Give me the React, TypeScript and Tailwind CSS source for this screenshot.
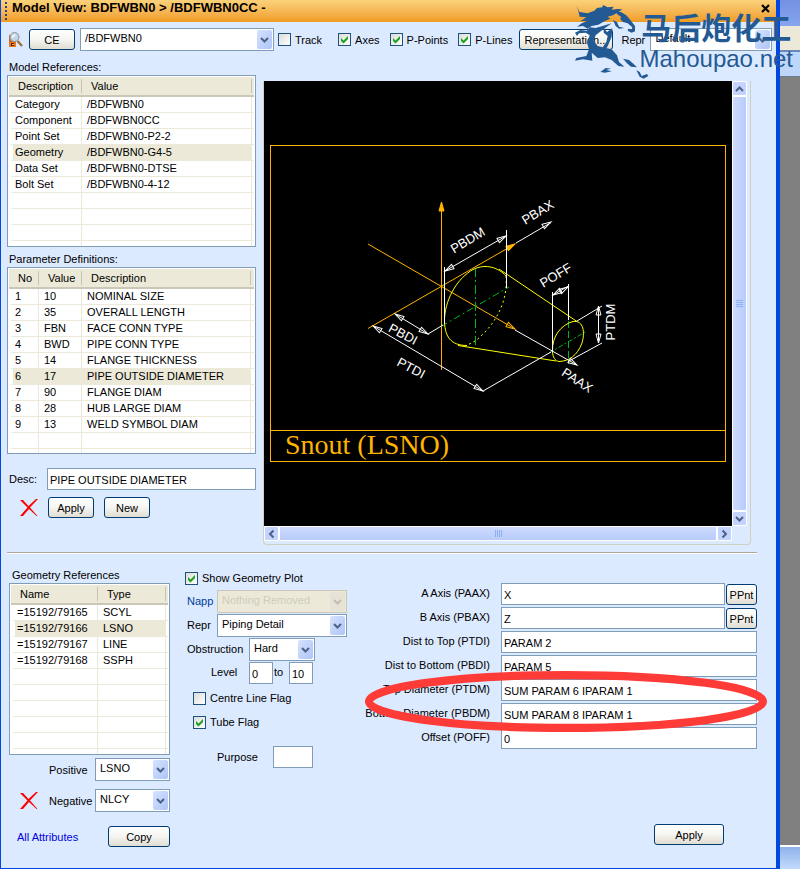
import React from "react";

type Column = { title: string; width: string };

function CheckBox({ label, checked = false }: { label: string; checked?: boolean }) {
  return (
    <label className="flex items-center gap-1 whitespace-nowrap">
      <span className="grid">
        <input
          type="checkbox"
          defaultChecked={checked}
          className="peer col-start-1 row-start-1 size-[13px] appearance-none border border-[#1c5180] bg-linear-to-br from-[#dcdcd7] to-white"
        />
        <svg
          viewBox="0 0 13 13"
          className="pointer-events-none invisible col-start-1 row-start-1 size-[13px] peer-checked:visible"
        >
          <path d="M3 5v3l2.500 2.500L10 6V3L5.500 7.500z" fill="#21a121" />
        </svg>
      </span>
      {label}
    </label>
  );
}

function Button({ children, className = "" }: { children: React.ReactNode; className?: string }) {
  return (
    <button
      type="button"
      className={`h-[21px] shrink-0 rounded-[3px] border border-[#003c74] bg-linear-to-b from-white via-[#f5f5f1] to-[#e0ddd2] text-center leading-[18px] whitespace-nowrap ${className}`}
    >
      {children}
    </button>
  );
}

function Select({
  id,
  value,
  className = "",
  disabled = false,
}: {
  id: string;
  value: string;
  className?: string;
  disabled?: boolean;
}) {
  return (
    <span className={`grid h-[23px] ${className}`}>
      <select
        id={id}
        disabled={disabled}
        className="col-start-1 row-start-1 h-[23px] w-full appearance-none border border-[#7f9db9] bg-white pb-[3px] pl-1 text-black disabled:border-[#c9c7ba] disabled:bg-[#ece9d8] disabled:text-[#cfccc0] disabled:opacity-100"
      >
        <option>{value}</option>
      </select>
      <span
        className={`pointer-events-none col-start-1 row-start-1 mt-[2px] mr-[2px] flex h-[19px] w-[15px] items-center justify-center justify-self-end rounded-[2px] ${
          disabled ? "bg-[#e6e3d6] text-[#c0bdb0]" : "bg-linear-to-br from-[#d6e2ff] to-[#aec4f8] text-[#4d6185]"
        }`}
      >
        <Chevron className="rotate-0" />
      </span>
    </span>
  );
}

function Chevron({ className = "" }: { className?: string }) {
  return (
    <svg viewBox="0 0 9 6" className={`h-[6px] w-[9px] ${className}`}>
      <path d="M1 1l3.500 3.500L8 1" fill="none" stroke="currentColor" strokeWidth="2" />
    </svg>
  );
}

function TextBox({ id, value, className = "", label }: { id: string; value: string; className?: string; label?: string }) {
  return (
    <input
      id={id}
      type="text"
      aria-label={label}
      defaultValue={value}
      className={`h-[22px] min-w-0 border border-[#7f9db9] bg-white pt-px pl-[2px] ${className}`}
    />
  );
}

function DataTable({
  label,
  columns,
  rows,
  selected,
  total,
  className,
}: {
  label: string;
  columns: Column[];
  rows: string[][];
  selected: number;
  total: number;
  className: string;
}) {
  const filled = Array.from({ length: total }, (_, i) => rows[i] ?? columns.map(() => ""));
  return (
    <div className={`overflow-hidden border border-[#7f9db9] bg-white p-px ${className}`}>
      <table aria-label={label} className="w-full table-fixed border-separate border-spacing-0">
        <thead>
          <tr className="bg-[#ece9d8]">
            {columns.map((c) => (
              <th
                key={c.title}
                className={`h-5 border-b-2 border-[#cbc7b8] p-0 text-left font-normal ${c.width}`}
              >
                <div className="h-[14px] border-r border-[#c7c5b2] pl-[9px] leading-[15px]">{c.title}</div>
              </th>
            ))}
            <th className="h-5 border-b-2 border-[#cbc7b8] p-0" />
          </tr>
        </thead>
        <tbody>
          {filled.map((row, r) => (
            <tr key={r} className={r === selected ? "bg-[#ece9d8]" : "bg-white"}>
              {row.map((cell, i) => (
                <td
                  key={i}
                  className={`h-4 border-r border-b border-[#ece9d8] p-0 leading-[15px] whitespace-nowrap ${
                    i === 0 ? "border-l-4 border-l-white pl-[2px]" : "pl-[5px]"
                  }`}
                >
                  {cell}
                </td>
              ))}
              <td className="h-4 border-b border-[#ece9d8] bg-white p-0" />
            </tr>
          ))}
        </tbody>
      </table>
    </div>
  );
}

function DeleteButton() {
  return (
    <button type="button" aria-label="Delete" className="h-[18px] w-[18px] shrink-0">
      <svg viewBox="0 0 18 18" className="size-[18px]">
        <path d="M0 1h3l5.500 6L16 0h2L10 8.500 17.500 17h-1L9 10l-6 7H0l7.500-8.500z" fill="#f00" />
      </svg>
    </button>
  );
}

function SearchIcon() {
  return (
    <svg viewBox="0 0 16 16" className="size-4 shrink-0">
      <path d="M1 3h7v12H1z" fill="#c9662a" />
      <path d="M1 10h7v5H1z" fill="#e8761c" />
      <path d="M3 11h3v3H3z" fill="#5b2408" />
      <path d="M4 12h2v1H4z" fill="#ffb050" />
      <path d="M9.500 9l4.500 5" stroke="#a0703c" strokeWidth="2.500" />
      <circle cx="6.500" cy="5" r="4.500" fill="#c4d6e4" stroke="#8a949e" />
      <path d="M4 4.500l2-2h2l-4 4z" fill="#fff" />
    </svg>
  );
}

const WHITE = "#ffffff";
const ORANGE = "#ffb400";

/* Arrow head whose tip is at (x, y), turned by `a` degrees. */
function Head({ x, y, a, color = WHITE, fill = "none" }: { x: number; y: number; a: number; color?: string; fill?: string }) {
  return (
    <path
      d="M0 0l-9-2.500v5z"
      transform={`translate(${x} ${y}) rotate(${a})`}
      stroke={color}
      fill={fill}
    />
  );
}

const dimensionLabels = [
  { t: "PBDM", x: 470, y: 244, a: -31 },
  { t: "PBAX", x: 540, y: 216, a: -31 },
  { t: "POFF", x: 558, y: 279, a: -31 },
  { t: "PTDM", x: 615, y: 322, a: -90 },
  { t: "PBDI", x: 401, y: 338, a: 28 },
  { t: "PTDI", x: 409, y: 372, a: 28 },
  { t: "PAAX", x: 575, y: 384, a: 33 },
];

function Plot() {
  return (
    <svg viewBox="264 81 468 445" className="block w-full bg-black" role="img" aria-label="Snout (LSNO)">
      <g fill="none" stroke={ORANGE} shapeRendering="crispEdges">
        <path d="M270.500 145.500h455v316h-455zM270.500 430.500h455" />
      </g>
      <g fill="none" stroke={ORANGE}>
        <path d="M441.500 202v168" shapeRendering="crispEdges" />
        <path d="M368 244L515 329M368 328.500L515 244" />
        <Head x={441.5} y={202} a={-90} color={ORANGE} fill={ORANGE} />
        <Head x={515} y={244} a={-30} color={ORANGE} fill={ORANGE} />
        <Head x={515} y={329} a={30} color={ORANGE} />
      </g>
      <g fill="none" stroke="#00b41e">
        <path d="M475.500 268v77" strokeDasharray="9 3 2 3" />
        <path d="M441 326.500L509 287" strokeDasharray="7 3 2 3" />
        <path d="M568.500 321v43" strokeDasharray="7 3" />
        <path d="M549 353l37-21.500" strokeDasharray="5 2 2 2" />
      </g>
      <g fill="none" stroke="#ffff00">
        <path d="M467 345.500C451 345.500 444 337 444.500 318C446 297 458 278 473 269.500C486 263 499 268 506 276" />
        <path d="M506 276C508 299 498 320 481 336C476 341 472 343 466 345.500" strokeDasharray="2 3" />
        <path d="M499 269L577 321.500M458 345.500L556 361" />
        <path d="M552.500 351C552 336 561 325 573 321.500C584 320 585 333 582 343C577 356 569 361 559 361.500C555 361 552.500 357 552.500 351z" />
      </g>
      <g fill="none" stroke={WHITE}>
        <path d="M444.500 267v57M506.500 230v58M552.500 292v60M568.500 284v36" shapeRendering="crispEdges" />
        <path d="M445 271l61-35M516 243l35-20.500M553 295l15.500-9" />
        <path d="M395 314l33 20 15-9M373 326l110 65 68-39" />
        <path d="M515 330l62 35M577 321l25-15M569 361l33-18M598.500 307v35" />
        <Head x={445} y={271} a={150} />
        <Head x={506} y={236} a={-30} />
        <Head x={551} y={222} a={-30} />
        <Head x={395} y={314} a={211} />
        <Head x={428} y={334} a={31} />
        <Head x={373} y={326} a={211} />
        <Head x={483} y={391} a={31} />
        <Head x={577} y={365} a={30} />
        <Head x={598.5} y={306} a={-90} />
        <Head x={598.5} y={343} a={90} />
        <Head x={553} y={295} a={150} />
        <Head x={568} y={287} a={-30} />
      </g>
      <g fill={WHITE} fontSize="13" textAnchor="middle" fontFamily="Liberation Sans, sans-serif">
        {dimensionLabels.map((d) => (
          <text key={d.t} transform={`translate(${d.x} ${d.y}) rotate(${d.a})`}>
            {d.t}
          </text>
        ))}
      </g>
      <text x="285" y="454" fill={ORANGE} fontSize="28" fontFamily="Liberation Serif, serif">
        Snout (LSNO)
      </text>
    </svg>
  );
}

function ScrollArrow({ turn, label }: { turn: string; label: string }) {
  return (
    <button
      type="button"
      aria-label={label}
      className="flex size-[15px] shrink-0 items-center justify-center rounded-[2px] border border-white bg-[#c3d3fd] text-[#4d6185]"
    >
      <Chevron className={turn} />
    </button>
  );
}

function PlotPane() {
  return (
    <div className="grid min-w-0 flex-1 grid-cols-[1fr_15px] rounded-b-[4px] border-x border-b border-[#d0d0bf] pr-[3px] pb-[3px]">
      <Plot />
      <div className="flex flex-col bg-[#eef3fe]">
        <ScrollArrow turn="rotate-180" label="Scroll up" />
        <div className="flex flex-1 flex-col items-center justify-center gap-px rounded-[2px] border border-white bg-linear-to-r from-[#cddafd] to-[#b8cbfa]">
          {[0, 1, 2, 3].map((n) => (
            <span key={n} className="h-px w-[7px] bg-[#8cb0f8]" />
          ))}
        </div>
        <ScrollArrow turn="rotate-0" label="Scroll down" />
      </div>
      <div className="flex bg-[#eef3fe]">
        <ScrollArrow turn="rotate-90" label="Scroll left" />
        <div className="flex flex-1 items-center justify-center gap-px rounded-[2px] border border-white bg-linear-to-b from-[#cddafd] to-[#b8cbfa]">
          {[0, 1, 2, 3].map((n) => (
            <span key={n} className="h-[7px] w-px bg-[#8cb0f8]" />
          ))}
        </div>
        <ScrollArrow turn="-rotate-90" label="Scroll right" />
      </div>
    </div>
  );
}

function Watermark() {
  return (
    <div className="pointer-events-none absolute top-[3px] right-[7px] flex text-[#245a94]">
      <svg viewBox="99 9 204 231" className="h-[77px] w-[68px] overflow-visible" fill="currentColor">
        <path d="M112 18L122 36L146 40L166 32L174 24L190 22L192 15L206 22L224 20L218 29L236 27L250 28L238 36L222 46L206 50L214 56L196 64L178 74L158 78L146 86L132 78L114 80L128 70L146 62L124 64L142 52L122 50L118 32Z" />
        <path d="M228 34L246 36L262 46L274 60L288 78L288 94L278 98L266 92L268 86L278 88L280 82L266 70L252 66L244 58L246 50L236 44Z" />
        <path d="M222 60L234 66L240 80L256 84L240 86L230 78Z" />
        <path d="M108 98L124 90L144 92L152 82L170 84L218 70L190 90L170 106L164 122L176 138L200 144L218 148L234 166L240 186L256 200L238 198L218 180L198 172L176 174L158 158L160 182L132 178L108 182L112 174L142 168L150 148L144 128L152 106L140 98L120 100L114 108Z" />
        <path d="M194 84L204 96L220 84L218 110L208 134L200 150L188 146L202 126L206 108L194 98Z" />
        <path d="M184 216L200 204L216 206L202 210L218 214L198 218Z" />
        <path d="M252 176L270 180L284 192L294 202L276 200L264 190Z" />
        <path d="M292 210L302 216L308 228L324 222L328 228L314 236L302 230Z" />
      </svg>
      <div className="flex flex-col items-center">
        <div className="h-[39px] font-['Noto_Sans_CJK_SC',sans-serif] text-[30px] leading-[46px] font-bold whitespace-nowrap">
          马后炮化工
        </div>
        <div className="font-['Liberation_Sans',sans-serif] text-[24px] leading-[34px] whitespace-nowrap">Mahoupao.net</div>
      </div>
    </div>
  );
}

const modelRows = [
  ["Category", "/BDFWBN0"],
  ["Component", "/BDFWBN0CC"],
  ["Point Set", "/BDFWBN0-P2-2"],
  ["Geometry", "/BDFWBN0-G4-5"],
  ["Data Set", "/BDFWBN0-DTSE"],
  ["Bolt Set", "/BDFWBN0-4-12"],
];

const paramRows = [
  ["1", "10", "NOMINAL SIZE"],
  ["2", "35", "OVERALL LENGTH"],
  ["3", "FBN", "FACE CONN TYPE"],
  ["4", "BWD", "PIPE CONN TYPE"],
  ["5", "14", "FLANGE THICKNESS"],
  ["6", "17", "PIPE OUTSIDE DIAMETER"],
  ["7", "90", "FLANGE DIAM"],
  ["8", "28", "HUB LARGE DIAM"],
  ["9", "13", "WELD SYMBOL DIAM"],
];

const geometryRows = [
  ["=15192/79165", "SCYL"],
  ["=15192/79166", "LSNO"],
  ["=15192/79167", "LINE"],
  ["=15192/79168", "SSPH"],
];

const attributes = [
  { id: "paax", label: "A Axis (PAAX)", value: "X", pick: true },
  { id: "pbax", label: "B Axis (PBAX)", value: "Z", pick: true },
  { id: "ptdi", label: "Dist to Top (PTDI)", value: "PARAM 2" },
  { id: "pbdi", label: "Dist to Bottom (PBDI)", value: "PARAM 5" },
  { id: "ptdm", label: "Top Diameter (PTDM)", value: "SUM PARAM 6 IPARAM 1" },
  { id: "pbdm", label: "Bottom Diameter (PBDM)", value: "SUM PARAM 8 IPARAM 1" },
  { id: "poff", label: "Offset (POFF)", value: "0" },
];

function Toolbar() {
  return (
    <div className="flex h-[23px] items-center">
      <SearchIcon />
      <Button className="ml-[5px] w-[46px]">CE</Button>
      <Select id="element" value="/BDFWBN0" className="mr-1 ml-[5px] w-[194px]" />
      <CheckBox label="Track" />
      <span className="w-4" />
      <CheckBox label="Axes" checked />
      <span className="w-[10px]" />
      <CheckBox label="P-Points" checked />
      <span className="w-[10px]" />
      <CheckBox label="P-Lines" checked />
      <span className="w-[7px]" />
      <Button className="w-[94px]">Representation...</Button>
      <label htmlFor="repr-top" className="ml-2 w-[29px]">
        Repr
      </label>
      <Select id="repr-top" value="Default" className="min-w-0 flex-1" />
    </div>
  );
}

function GeometryColumn() {
  return (
    <section className="w-[161px] shrink-0 pt-[13px]">
      <h2 className="h-4 pl-[3px] leading-4">Geometry References</h2>
      <DataTable
        label="Geometry References"
        className="h-[172px]"
        columns={[
          { title: "Name", width: "w-[87px]" },
          { title: "Type", width: "w-[68px]" },
        ]}
        rows={geometryRows}
        selected={1}
        total={10}
      />
      <div className="mt-[3px] flex items-center justify-end">
        <label htmlFor="positive" className="w-[46px]">
          Positive
        </label>
        <Select id="positive" value="LSNO" className="w-[75px]" />
      </div>
      <div className="mt-2 flex items-center justify-end">
        <DeleteButton />
        <label htmlFor="negative" className="ml-[11px] w-[46px]">
          Negative
        </label>
        <Select id="negative" value="NLCY" className="w-[75px]" />
      </div>
      <div className="mt-[14px] flex items-center justify-between pl-2">
        <a href="#attributes" className="text-[#0000e0]">
          All Attributes
        </a>
        <Button className="w-[62px]">Copy</Button>
      </div>
    </section>
  );
}

function OptionsColumn() {
  return (
    <section className="w-[162px] shrink-0 pt-3">
      <div className="flex h-6 items-center">
        <CheckBox label="Show Geometry Plot" checked />
      </div>
      <div className="flex h-6 items-start pl-[2px]">
        <label htmlFor="napp" className="w-[30px] leading-[23px] text-[#003c9c]">
          Napp
        </label>
        <Select id="napp" value="Nothing Removed" disabled className="flex-1" />
      </div>
      <div className="flex h-6 items-start pl-[2px]">
        <label htmlFor="repr" className="w-[30px] leading-[23px]">
          Repr
        </label>
        <Select id="repr" value="Piping Detail" className="flex-1" />
      </div>
      <div className="flex h-6 items-start pl-[2px]">
        <label htmlFor="obstruction" className="w-[62px] leading-[23px]">
          Obstruction
        </label>
        <Select id="obstruction" value="Hard" className="w-[66px]" />
      </div>
      <div className="flex h-6 items-start pl-[26px]">
        <label htmlFor="level-from" className="w-[38px] leading-5">
          Level
        </label>
        <TextBox id="level-from" value="0" className="w-6" />
        <label htmlFor="level-to" className="w-4 pl-px leading-5">
          to
        </label>
        <TextBox id="level-to" value="10" className="w-6" />
      </div>
      <div className="flex h-6 items-center pl-2">
        <CheckBox label="Centre Line Flag" />
      </div>
      <div className="flex h-6 items-center pl-2">
        <CheckBox label="Tube Flag" checked />
      </div>
      <div className="mt-3 flex items-center pl-8">
        <label htmlFor="purpose" className="w-14">
          Purpose
        </label>
        <TextBox id="purpose" value="" className="w-10" />
      </div>
    </section>
  );
}

function AttributesColumn() {
  return (
    <section className="relative min-w-0 flex-1 pt-[29px]">
      {attributes.map((a) => (
        <div key={a.id} className="flex h-6 items-start">
          <label htmlFor={a.id} className="mr-[11px] w-[128px] shrink-0 text-right leading-5 whitespace-nowrap">
            {a.label}
          </label>
          <TextBox id={a.id} value={a.value} className="flex-1" />
          {a.pick && <Button className="mt-px ml-px w-[31px]">PPnt</Button>}
        </div>
      ))}
      <div className="mt-[73px] flex justify-end pr-[33px]">
        <Button className="w-[70px]">Apply</Button>
      </div>
      <svg
        viewBox="0 0 404 60"
        preserveAspectRatio="none"
        className="pointer-events-none absolute top-[117px] left-[2px] h-[61px] w-[calc(100%+9px)]"
      >
        <ellipse cx="202" cy="30" rx="197" ry="26" fill="none" stroke="#ff3b38" strokeWidth="8" />
      </svg>
    </section>
  );
}

export default function App() {
  return (
    <div className="relative flex min-h-screen overflow-hidden bg-[#808080] font-['Liberation_Sans',Arial,sans-serif] text-[11px] leading-4 text-black">
      <main className="flex min-w-0 flex-1 flex-col border-r-4 border-b border-l border-[#0048e0] bg-[#dceaff]">
        <header className="flex h-[22px] items-center bg-linear-to-b from-[#fad27a] to-[#f09c22] pr-[6px] pl-1">
          <span className="mr-[5px] h-[18px] border-l-2 border-dotted border-[#27418c]" />
          <h1 className="flex-1 pb-[6px] text-[13px] font-bold whitespace-nowrap">
            Model View: BDFWBN0 &gt; /BDFWBN0CC -
          </h1>
          <button type="button" aria-label="Close" className="mb-[6px]">
            <svg viewBox="0 0 9 9" className="size-[9px]">
              <path d="M1 1l7 7M8 1L1 8" stroke="#000" strokeWidth="2.200" />
            </svg>
          </button>
        </header>

        <div className="pt-[6px] pr-1 pl-[7px]">
          <Toolbar />
        </div>

        <div className="flex items-start gap-[7px] pr-[25px] pl-[6px]">
          <section className="w-[249px] shrink-0 pt-2">
            <h2 className="h-4 pl-[2px]">Model References:</h2>
            <DataTable
              label="Model References"
              className="h-[172px]"
              columns={[
                { title: "Description", width: "w-[73px]" },
                { title: "Value", width: "w-[170px]" },
              ]}
              rows={modelRows}
              selected={3}
              total={10}
            />
            <h2 className="h-5 pt-1 pl-[2px]">Parameter Definitions:</h2>
            <DataTable
              label="Parameter Definitions"
              className="h-[187px]"
              columns={[
                { title: "No", width: "w-[30px]" },
                { title: "Value", width: "w-[43px]" },
                { title: "Description", width: "w-[169px]" },
              ]}
              rows={paramRows}
              selected={5}
              total={11}
            />
            <div className="mt-[14px] flex items-center">
              <label htmlFor="desc" className="w-10 pl-[2px]">
                Desc:
              </label>
              <TextBox id="desc" value="PIPE OUTSIDE DIAMETER" className="flex-1" />
            </div>
            <div className="mt-[7px] flex items-center pl-[13px]">
              <DeleteButton />
              <Button className="ml-[10px] w-[46px]">Apply</Button>
              <Button className="ml-[10px] w-[46px]">New</Button>
            </div>
          </section>
          <div className="flex min-w-0 flex-1 pt-[30px]">
            <PlotPane />
          </div>
        </div>

        <hr className="mt-[7px] mr-[19px] ml-[6px] h-[2px] border-t border-b border-t-[#aca899] border-b-white" />

        <div className="flex gap-[15px] pr-[19px] pb-4 pl-2">
          <GeometryColumn />
          <OptionsColumn />
          <AttributesColumn />
        </div>
      </main>

      <aside className="flex w-5 shrink-0 flex-col">
        <div className="h-[26px] bg-linear-to-b from-[#7390e2] to-[#86a6ee]" />
        <div className="h-[26px] border-b-2 border-[#6c86b8] bg-[#ece9d8]" />
        <div className="h-[25px] border-b border-[#6c7a94] bg-[#bfd6fb]" />
        <div className="flex-1" />
        <div className="h-[24px] border-t-2 border-white bg-linear-to-b from-[#8fb2ea] to-[#c3dafc]" />
      </aside>

      <Watermark />
    </div>
  );
}
